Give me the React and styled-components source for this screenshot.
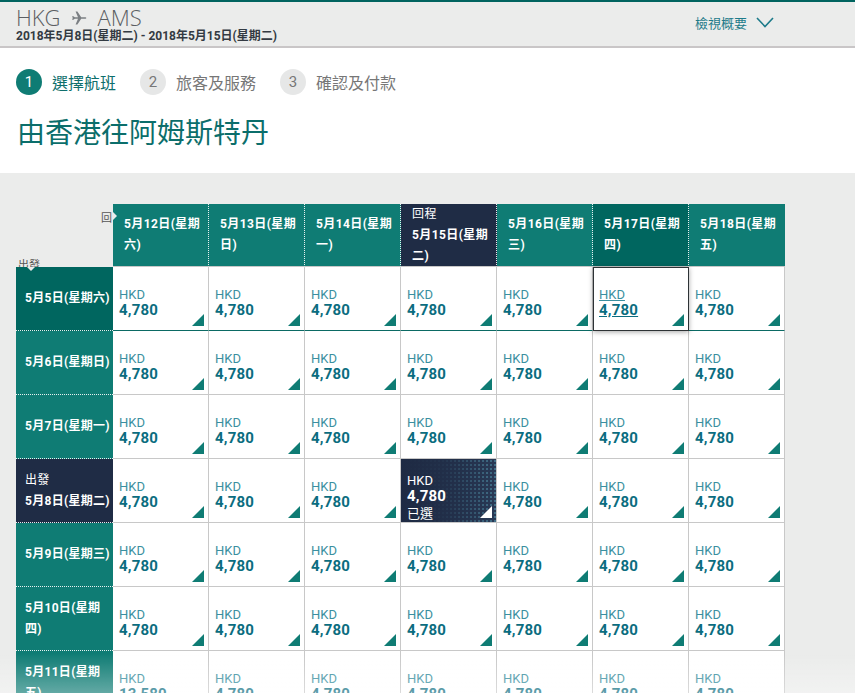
import React from "react";
import styled, { createGlobalStyle, css } from "styled-components";

const FONT = `"Roboto", "Noto Sans CJK TC", sans-serif`;

const GlobalStyle = createGlobalStyle`
  html, body {
    margin: 0;
    padding: 0;
    background: #ebeceb;
    font-family: ${FONT};
    overflow: hidden;
  }
`;

const TopBar = styled.div`
  height: 44px;
  box-sizing: content-box;
  border-top: 2px solid #00645f;
  border-bottom: 2px solid #c9c6c7;
  background: #ebeceb;
  padding: 0 16px;
  display: flex;
  align-items: flex-start;
  justify-content: space-between;
`;

const RouteBlock = styled.div`
  display: flex;
  flex-direction: column;
  padding-top: 4px;
`;

const Route = styled.div`
  display: flex;
  align-items: center;
  gap: 10px;
  font-size: 22px;
  font-weight: 300;
  color: #5b5f63;
  line-height: 23px;
  font-family: "Open Sans", ${FONT};
  svg {
    margin-top: 1px;
  }
`;

const Dates = styled.div`
  font-size: 12px;
  font-weight: 700;
  color: #333a42;
  line-height: 14px;
`;

const Summary = styled.div`
  display: flex;
  align-items: center;
  gap: 9px;
  margin: 11px 65px 0 0;
  font-size: 13px;
  color: #1d7b8a;
`;

const Intro = styled.div`
  background: #fff;
  padding: 21px 16px 21px;
`;

const Steps = styled.div`
  display: flex;
  align-items: center;
  gap: 24px;
`;

const Step = styled.div`
  display: flex;
  align-items: center;
  gap: 10px;
  font-size: 16px;
  color: ${(p) => (p.$active ? "#0e6f6c" : "#777")};
`;

const StepNum = styled.span`
  width: 26px;
  height: 26px;
  border-radius: 50%;
  display: flex;
  align-items: center;
  justify-content: center;
  font-size: 15px;
  background: ${(p) => (p.$active ? "#0f7c74" : "#e6e7e7")};
  color: ${(p) => (p.$active ? "#fff" : "#777")};
`;

const Title = styled.h1`
  margin: 21px 0 0 1px;
  font-size: 28px;
  line-height: 36px;
  font-weight: 400;
  color: #0b6e6b;
`;

const Section = styled.div`
  padding: 31px 16px;
`;

const Grid = styled.div`
  display: grid;
  grid-template-columns: 97px repeat(7, 96px);
  grid-template-rows: 63px;
  grid-auto-rows: 64px;
`;

const Corner = styled.div`
  position: relative;
  overflow: hidden;
`;

const CornerLabel = styled.span`
  position: absolute;
  font-size: 11px;
  color: #555;
  line-height: 12px;
  ${(p) =>
    p.$top
      ? css`
          top: 9px;
          right: 1px;
        `
      : css`
          bottom: -5px;
          left: 2px;
        `}
`;

const headBg = {
  normal: "#0f7c74",
  hover: "#00665f",
  selected: "#1f2c45",
};

const ColHead = styled.div`
  position: relative;
  box-sizing: border-box;
  background: ${(p) => headBg[p.$variant]};
  border-right: ${(p) => (p.$last ? "none" : "1px dotted rgba(255,255,255,0.9)")};
  border-bottom: 1px solid #c8c8c8;
  color: #fff;
  font-size: 12px;
  font-weight: 700;
  line-height: 21px;
  letter-spacing: 0.4px;
  padding: 0 3px 0 11px;
  display: flex;
  flex-direction: column;
  justify-content: center;
  ${(p) =>
    p.$first &&
    css`
      &::before {
        content: "";
        position: absolute;
        left: 0;
        top: 8px;
        border-top: 4px solid transparent;
        border-bottom: 4px solid transparent;
        border-left: 4px solid #ebeceb;
      }
    `}
`;

const SubLabel = styled.span`
  font-weight: 400;
`;

const RowHead = styled.div`
  position: relative;
  box-sizing: border-box;
  background: ${(p) => headBg[p.$variant]};
  border-bottom: 1px dotted rgba(255, 255, 255, 0.9);
  color: #fff;
  font-size: 12px;
  font-weight: 700;
  line-height: 21px;
  letter-spacing: 0.3px;
  padding: 0 3px 0 9px;
  display: flex;
  flex-direction: column;
  justify-content: center;
  ${(p) =>
    p.$first &&
    css`
      &::before {
        content: "";
        position: absolute;
        top: 0;
        left: 11px;
        border-left: 4px solid transparent;
        border-right: 4px solid transparent;
        border-top: 4px solid #ebeceb;
      }
    `}
`;

const Cell = styled.div`
  position: relative;
  box-sizing: border-box;
  background: #fff;
  border-right: 1px solid #c8c8c8;
  border-bottom: 1px solid ${(p) => (p.$rowHover ? "#0b6a64" : "#c8c8c8")};
  padding: 20px 6px 0;
  display: flex;
  flex-direction: column;
  &::after {
    content: "";
    position: absolute;
    right: 4px;
    bottom: 4px;
    border-left: 12px solid transparent;
    border-bottom: 12px solid #0f7c74;
  }
  ${(p) =>
    p.$hover &&
    css`
      border: 1px solid #2d3235;
      box-shadow: 0 1px 5px rgba(0, 0, 0, 0.35);
      z-index: 2;
      padding: 19px 5px 0;
    `}
  ${(p) =>
    p.$selected &&
    css`
      padding-top: 14px;
      background:
        linear-gradient(90deg, #1e2a43 0%, rgba(33, 46, 72, 0.92) 45%, rgba(40, 58, 86, 0.2) 100%),
        radial-gradient(circle, rgba(100, 190, 210, 0.7) 0.6px, transparent 1px) 0 0 / 4px 4px,
        linear-gradient(90deg, #1d2942 0%, #2a3a56 100%);
      &::after {
        border-bottom-color: #fff;
      }
    `}
`;

const Currency = styled.span`
  font-size: 13px;
  line-height: 15px;
  color: ${(p) => (p.$light ? "#fff" : "#3b8fa0")};
  text-decoration: ${(p) => (p.$underline ? "underline" : "none")};
`;

const Price = styled.span`
  font-size: 15px;
  font-weight: 700;
  line-height: 17px;
  letter-spacing: 0.2px;
  color: ${(p) => (p.$light ? "#fff" : "#0b6d80")};
  text-decoration: ${(p) => (p.$underline ? "underline" : "none")};
`;

const Chosen = styled.span`
  font-size: 13px;
  line-height: 18px;
  color: #fff;
`;

const Fade = styled.div`
  position: fixed;
  left: 0;
  right: 0;
  bottom: 0;
  height: 40px;
  pointer-events: none;
  background: linear-gradient(to bottom, rgba(255, 255, 255, 0), rgba(255, 255, 255, 0.35));
`;

const Plane = () => (
  <svg width="17" height="14" viewBox="0 0 17 14">
    <path
      d="M1 5.2 L2.4 5.2 L3.8 6.2 L7 6.2 L4.6 0.6 L6.4 0.6 L10.2 6.2 L14.6 6.2 Q16.4 7 14.6 7.8 L10.2 7.8 L6.4 13.4 L4.6 13.4 L7 7.8 L3.8 7.8 L2.4 8.8 L1 8.8 L1.8 7 Z"
      fill="#7b7f83"
    />
  </svg>
);

const Chevron = () => (
  <svg width="18" height="11" viewBox="0 0 18 11">
    <polyline points="1,1 9,9.5 17,1" fill="none" stroke="#1d7b8a" strokeWidth="1.6" />
  </svg>
);

const columns = [
  { label: "5月12日(星期六)" },
  { label: "5月13日(星期日)" },
  { label: "5月14日(星期一)" },
  { label: "5月15日(星期二)", sub: "回程", variant: "selected" },
  { label: "5月16日(星期三)" },
  { label: "5月17日(星期四)", variant: "hover" },
  { label: "5月18日(星期五)" },
];

const rows = [
  { label: "5月5日(星期六)", variant: "hover" },
  { label: "5月6日(星期日)" },
  { label: "5月7日(星期一)" },
  { label: "5月8日(星期二)", sub: "出發", variant: "selected" },
  { label: "5月9日(星期三)" },
  { label: "5月10日(星期四)" },
  { label: "5月11日(星期五)", prices: ["13,580"] },
];

export default function App() {
  return (
    <>
      <GlobalStyle />
      <TopBar>
        <RouteBlock>
          <Route>
            HKG <Plane /> AMS
          </Route>
          <Dates>2018年5月8日(星期二) - 2018年5月15日(星期二)</Dates>
        </RouteBlock>
        <Summary>
          檢視概要 <Chevron />
        </Summary>
      </TopBar>
      <Intro>
        <Steps>
          <Step $active>
            <StepNum $active>1</StepNum>選擇航班
          </Step>
          <Step>
            <StepNum>2</StepNum>旅客及服務
          </Step>
          <Step>
            <StepNum>3</StepNum>確認及付款
          </Step>
        </Steps>
        <Title>由香港往阿姆斯特丹</Title>
      </Intro>
      <Section>
        <Grid>
          <Corner>
            <CornerLabel $top>回</CornerLabel>
            <CornerLabel>出發</CornerLabel>
          </Corner>
          {columns.map((c, i) => (
            <ColHead
              key={c.label}
              $variant={c.variant || "normal"}
              $first={i === 0}
              $last={i === columns.length - 1}
            >
              {c.sub && <SubLabel>{c.sub}</SubLabel>}
              <span>{c.label}</span>
            </ColHead>
          ))}
          {rows.map((r, ri) => (
            <React.Fragment key={r.label}>
              <RowHead $variant={r.variant || "normal"} $first={ri === 0}>
                {r.sub && <SubLabel>{r.sub}</SubLabel>}
                <span>{r.label}</span>
              </RowHead>
              {columns.map((c, ci) => {
                const selected = r.variant === "selected" && c.variant === "selected";
                const hover = r.variant === "hover" && c.variant === "hover";
                const price = (r.prices && r.prices[ci]) || "4,780";
                return (
                  <Cell
                    key={c.label}
                    $selected={selected}
                    $hover={hover}
                    $rowHover={r.variant === "hover"}
                  >
                    <Currency $light={selected} $underline={hover}>
                      HKD
                    </Currency>
                    <Price $light={selected} $underline={hover}>
                      {price}
                    </Price>
                    {selected && <Chosen>已選</Chosen>}
                  </Cell>
                );
              })}
            </React.Fragment>
          ))}
        </Grid>
      </Section>
      <Fade />
    </>
  );
}
